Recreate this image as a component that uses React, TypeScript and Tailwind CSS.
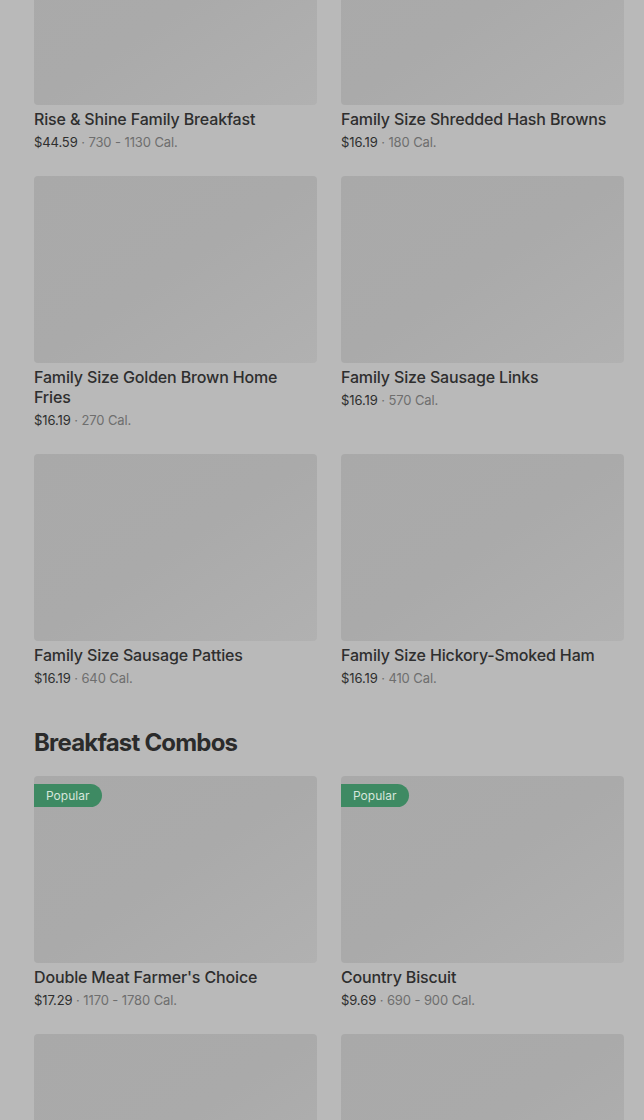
import React from 'react'

type Item = { name: string; price: string; cal: string; popular?: boolean }

const familyItems: Item[] = [
  { name: 'Rise & Shine Family Breakfast', price: '$44.59', cal: '730 - 1130 Cal.' },
  { name: 'Family Size Shredded Hash Browns', price: '$16.19', cal: '180 Cal.' },
  { name: 'Family Size Golden Brown Home Fries', price: '$16.19', cal: '270 Cal.' },
  { name: 'Family Size Sausage Links', price: '$16.19', cal: '570 Cal.' },
  { name: 'Family Size Sausage Patties', price: '$16.19', cal: '640 Cal.' },
  { name: 'Family Size Hickory-Smoked Ham', price: '$16.19', cal: '410 Cal.' },
]

const comboItems: Item[] = [
  { name: "Double Meat Farmer's Choice", price: '$17.29', cal: '1170 - 1780 Cal.', popular: true },
  { name: 'Country Biscuit', price: '$9.69', cal: '690 - 900 Cal.', popular: true },
  { name: 'Sausage Biscuit', price: '$5.49', cal: '460 Cal.' },
  { name: 'Bacon Biscuit', price: '$5.49', cal: '410 Cal.' },
]

const Card = ({ item }: { item: Item }) => {
  return (
    <div className="flex flex-col">
      <div className="relative h-[187px] w-full rounded-[4px] bg-gradient-to-br from-[#a9a9a9] via-[#aaaaaa] to-[#b1b1b1]">
        {item.popular && (
          <span className="absolute left-0 top-[8px] h-[23px] pl-[12px] pr-[13px] rounded-r-full bg-[#3e8a63] text-[12px] leading-[23px] text-[#d6e6dc]">
            Popular
          </span>
        )}
      </div>
      <h3 className="mt-[4px] text-[16px] leading-[20px] font-medium text-[#2e2e2e] tracking-[-0.15px]">
        {item.name}
      </h3>
      <p className="mt-[3px] text-[13px] leading-[20px] text-[#2e2e2e] tracking-[-0.1px]">
        {item.price}
        <span className="text-[#6e6e6e]"> · {item.cal}</span>
      </p>
    </div>
  )
}

export default function App() {
  return (
    <div
      className="h-[1120px] overflow-hidden bg-[#b9b9b9]"
      style={{ fontFamily: 'Inter, "Noto Sans", sans-serif' }}
    >
      <div className="-mt-[82px] pl-[34px] pr-[20px]">
        <div className="grid grid-cols-2 gap-x-[24px] gap-y-[24px]">
          {familyItems.map((item, i) => (
            <Card key={i} item={item} />
          ))}
        </div>

        <h2 className="mt-[39px] mb-[17px] text-[24px] leading-[32px] font-bold text-[#2b2b2b] tracking-[-0.8px]">
          Breakfast Combos
        </h2>

        <div className="grid grid-cols-2 gap-x-[24px] gap-y-[24px]">
          {comboItems.map((item, i) => (
            <Card key={i} item={item} />
          ))}
        </div>
      </div>
    </div>
  )
}
